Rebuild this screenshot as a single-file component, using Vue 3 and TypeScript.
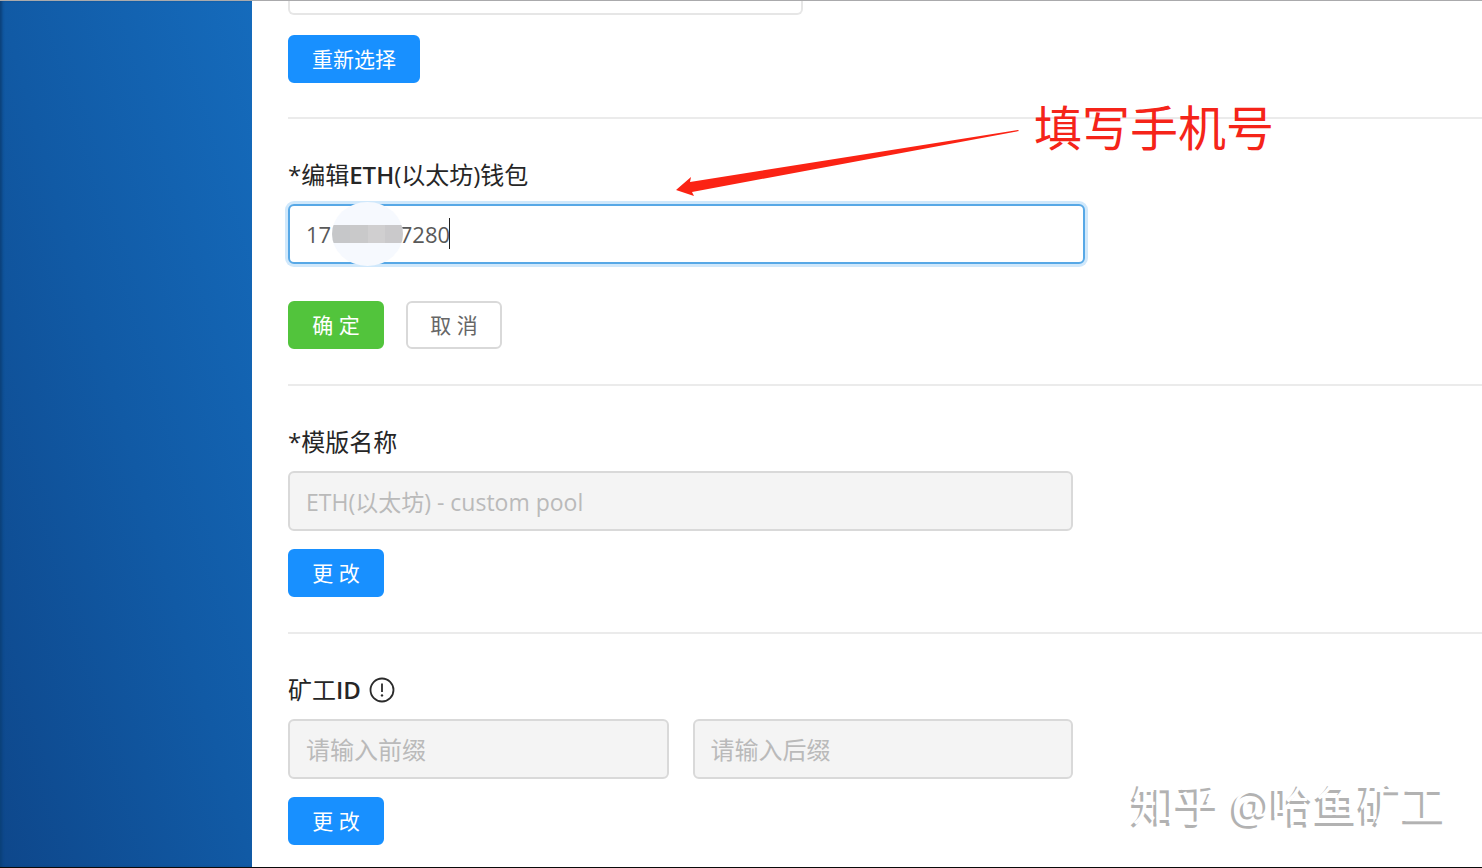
<script setup lang="ts">
import { ref } from 'vue'

const nbsp = '\u00a0'
const wallet = ref('17' + nbsp.repeat(12) + '7280')
const prefix = ref('')
const suffix = ref('')
const templateName = ref('ETH(以太坊) - custom pool')
const coin = ref('')
</script>

<template>
  <div class="page">
    <aside class="sidebar"></aside>
    <main class="content">
      <section class="block first">
        <input v-model="coin" class="field clipped" type="text" aria-label="币种" readonly />
        <button type="button" class="btn primary">重新选择</button>
      </section>

      <section class="block">
        <label class="title" for="wallet">*编辑<b>ETH</b>(以太坊)钱包</label>
        <div class="wallet">
          <input id="wallet" v-model="wallet" class="field active" type="text" />
          <span class="mask"><span class="mosaic"><i></i><i></i><i></i><i></i></span></span>
          <span class="caret"></span>
        </div>
        <div class="actions spaced">
          <button type="button" class="btn success">确 定</button>
          <button type="button" class="btn plain">取 消</button>
        </div>
        <svg class="arrow" width="344" height="70" viewBox="0 0 344 70" aria-hidden="true">
          <path d="M0 63 L15 50 L14 55 L342 3 L343 4 L16 65 L18 69 Z" fill="#fb2314" />
        </svg>
        <p class="note">填写手机号</p>
      </section>

      <section class="block">
        <label class="title" for="template">*模版名称</label>
        <input id="template" v-model="templateName" class="field regular" type="text" disabled />
        <div class="actions">
          <button type="button" class="btn primary">更 改</button>
        </div>
      </section>

      <section class="block last">
        <label class="title" for="prefix">
          矿工<b>ID</b>
          <svg class="info" width="26" height="26" viewBox="0 0 26 26" aria-hidden="true">
            <circle cx="13" cy="13" r="11.5" fill="none" stroke="#2b2b2b" stroke-width="1.8" />
            <path d="M13 6.5V15" stroke="#2b2b2b" stroke-width="1.8" />
            <circle cx="13" cy="18.4" r="1.2" fill="#2b2b2b" />
          </svg>
        </label>
        <div class="pair">
          <input id="prefix" v-model="prefix" class="field" type="text" placeholder="请输入前缀" disabled />
          <input v-model="suffix" class="field" type="text" placeholder="请输入后缀" aria-label="后缀" disabled />
        </div>
        <div class="actions">
          <button type="button" class="btn primary">更 改</button>
        </div>
      </section>
    </main>
    <p class="watermark">知乎 @哈鱼矿工</p>
  </div>
</template>

<style>
body {
  margin: 0;
  background: #fff;
}
</style>

<style scoped>
.page {
  position: relative;
  display: flex;
  box-sizing: border-box;
  min-height: 100vh;
  overflow: hidden;
  border-top: 1px solid #aaaaac;
  border-bottom: 1px solid #0a0a0a;
  background: #fff;
  color: #262626;
  font-family: "Open Sans", "Noto Sans CJK SC", sans-serif;
}

.page * {
  box-sizing: border-box;
}

.sidebar {
  flex: 0 0 252px;
  background: linear-gradient(to bottom left, #156bbc 0%, #115aa5 50%, #0e478b 100%);
  box-shadow: inset 3px 0 3px -1px #0b4078;
}

.content {
  flex: 1;
  min-width: 0;
  padding-left: 36px;
}

.block {
  position: relative;
  padding: 37px 0 35px;
  border-top: 2px solid #ebebeb;
}

.first {
  display: flex;
  flex-direction: column;
  align-items: flex-start;
  gap: 20px;
  padding: 0 0 34px;
  border-top: 0;
}

.last {
  padding-bottom: 20px;
}

.title {
  display: flex;
  align-items: center;
  height: 38px;
  margin-bottom: 10px;
  font-size: 24px;
  line-height: 38px;
}

.title b {
  font-weight: 600;
}

.info {
  margin-left: 8px;
}

.field {
  display: block;
  width: 100%;
  height: 60px;
  margin: 0;
  padding: 0 16px;
  border: 2px solid #d9d9d9;
  border-radius: 6px;
  outline: none;
  background: #fff;
  color: #595959;
  font-family: inherit;
  font-size: 24px;
}

.field:disabled {
  background: #f4f4f4;
  color: #bababa;
  -webkit-text-fill-color: #bababa;
}

.field::placeholder {
  color: #bababa;
  opacity: 1;
}

.clipped {
  max-width: 515px;
  height: 14px;
  border-color: #e6e6e6;
  border-top: 0;
  border-radius: 0 0 6px 6px;
}

.regular {
  max-width: 785px;
  font-size: 23px;
}

.wallet {
  position: relative;
  max-width: 797px;
}

.active {
  border-color: #57a8e6;
  box-shadow: 0 0 0 3px #d0e8fb;
  font-size: 22px;
  caret-color: transparent;
}

.mask {
  position: absolute;
  top: -2px;
  left: 44px;
  display: flex;
  align-items: center;
  width: 71px;
  height: 64px;
  overflow: hidden;
  border-radius: 50%;
  background: #f6f9fe;
}

.mosaic {
  display: flex;
  width: 100%;
  height: 18px;
}

.mosaic i {
  flex: 1;
  background: #d0cfd0;
}

.mosaic i:nth-child(1) {
  background: #c6c7c9;
}

.mosaic i:nth-child(2) {
  background: #c9c9ca;
}

.mosaic i:nth-child(4) {
  background: #cac9cb;
}

.caret {
  position: absolute;
  top: 14px;
  left: 161px;
  width: 1px;
  height: 31px;
  background: #222;
}

.pair {
  display: grid;
  grid-template-columns: 1fr 1fr;
  gap: 24px;
  max-width: 785px;
}

.actions {
  display: flex;
  gap: 22px;
  margin-top: 18px;
}

.spaced {
  margin-top: 37px;
}

.btn {
  min-width: 96px;
  height: 48px;
  padding: 0 22px;
  border: 2px solid transparent;
  border-radius: 6px;
  color: #fff;
  font-family: inherit;
  font-size: 21px;
  line-height: 28px;
  cursor: pointer;
}

.primary {
  border-color: #1890ff;
  background: #1890ff;
}

.success {
  border-color: #52c43c;
  background: #52c43c;
}

.plain {
  border-color: #d9d9d9;
  background: #fff;
  color: #666;
}

.arrow {
  position: absolute;
  top: 8px;
  left: 388px;
}

.note {
  position: absolute;
  top: -23px;
  left: 746px;
  margin: 0;
  color: #f52419;
  font-size: 48px;
  line-height: 64px;
  white-space: nowrap;
}

.watermark {
  position: absolute;
  right: 35px;
  bottom: 33px;
  margin: 0;
  color: #fff;
  font-size: 44px;
  line-height: 60px;
  text-shadow: -3px 3px 0 #b2b2b2;
  white-space: nowrap;
}
</style>
